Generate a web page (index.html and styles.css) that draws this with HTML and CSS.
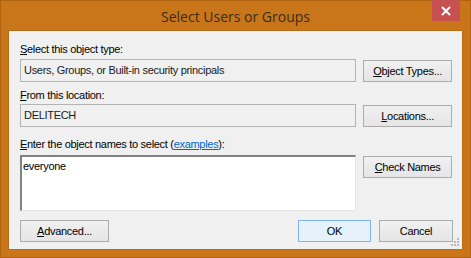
FILE: index.html
```html
<!DOCTYPE html>
<html lang="en">
<head>
  <meta charset="UTF-8" />
  <title>Select Users or Groups</title>
  <link rel="stylesheet" href="styles.css">
</head>
<body>

  <div class="window">
    <div class="titlebar">
      <div class="title">Select Users or Groups</div>
      <div class="close-btn">
        <svg width="10" height="10" viewBox="0 0 10 10"><path d="M1 1 L9 9 M9 1 L1 9" stroke="#fff" stroke-width="2" /></svg>
      </div>
    </div>

    <div class="client">
      <div class="label"><u>S</u>elect this object type:</div>
      <div class="row">
        <div class="field">Users, Groups, or Built-in security principals</div>
        <button class="btn"><u>O</u>bject Types...</button>
      </div>

      <div class="label label-tight"><u>F</u>rom this location:</div>
      <div class="row row-spaced">
        <div class="field">DELITECH</div>
        <button class="btn"><u>L</u>ocations...</button>
      </div>

      <div class="label label-loose"><u>E</u>nter the object names to select (<a href="#">examples</a>):</div>
      <div class="row row-top">
        <div class="names">everyone</div>
        <button class="btn"><u>C</u>heck Names</button>
      </div>

      <div class="footer">
        <button class="btn"><u>A</u>dvanced...</button>
        <div class="footer-right">
          <button class="btn btn-default">OK</button>
          <button class="btn btn-cancel">Cancel</button>
        </div>
      </div>

      <svg class="grip" width="8" height="8" viewBox="0 0 8 8">
        <rect x="6" y="0" width="2" height="2" fill="#b9b9b9" />
        <rect x="3" y="3" width="2" height="2" fill="#b9b9b9" />
        <rect x="6" y="3" width="2" height="2" fill="#b9b9b9" />
        <rect x="0" y="6" width="2" height="2" fill="#b9b9b9" />
        <rect x="3" y="6" width="2" height="2" fill="#b9b9b9" />
        <rect x="6" y="6" width="2" height="2" fill="#b9b9b9" />
      </svg>
    </div>
  </div>

</body>
</html>
```

FILE: styles.css
```css
body {
  margin: 0;
  background-color: #c97519;
  font-family: 'Liberation Sans', Arial, sans-serif;
  font-size: 11px;
  letter-spacing: -0.3px;
  color: #000;
}

.window {
  width: 471px;
  height: 258px;
  box-sizing: border-box;
  border: 1px solid #b0640f;
  background-color: #c97519;
}

.titlebar {
  position: relative;
  height: 29px;
  display: flex;
  justify-content: center;
  align-items: center;
}

.title {
  font-family: 'Open Sans', 'Liberation Sans', sans-serif;
  font-size: 14px;
  letter-spacing: 0;
  color: #3a2d1c;
  margin-top: 1px;
}

.close-btn {
  position: absolute;
  top: -1px;
  right: 10px;
  width: 28px;
  height: 21px;
  background-color: #c75050;
  display: flex;
  justify-content: center;
  align-items: center;
}

.client {
  position: relative;
  margin: 0 7px;
  height: 220px;
  box-sizing: border-box;
  border: 1px solid #b96c16;
  background-color: #f0f0f0;
  padding: 11px 10px 0 11px;
}

.label {
  line-height: 15px;
  height: 15px;
  margin-bottom: 2px;
}

.label-tight {
  margin-bottom: 1px;
}

.label-loose {
  margin-bottom: 3px;
}

.label a {
  color: #0066cc;
}

.row {
  display: flex;
  align-items: center;
  gap: 7px;
  margin-bottom: 6px;
}

.row-spaced {
  margin-bottom: 10px;
}

.row-top {
  align-items: flex-start;
  margin-bottom: 9px;
}

.field {
  width: 337px;
  height: 23px;
  box-sizing: border-box;
  border: 1px solid #b4b4b4;
  background-color: #f0f0f0;
  padding: 0 3px;
  line-height: 21px;
  color: #1a1a1a;
}

.names {
  width: 337px;
  height: 56px;
  box-sizing: border-box;
  border-top: 2px solid #828282;
  border-left: 2px solid #828282;
  border-right: 1px solid #e3e3e3;
  border-bottom: 1px solid #e3e3e3;
  background-color: #fff;
  padding: 2px 1px;
  line-height: 14px;
}

.btn {
  width: 89px;
  height: 22px;
  box-sizing: border-box;
  border: 1px solid #acacac;
  background: linear-gradient(#f0f0f0, #e5e5e5);
  font-family: inherit;
  font-size: 11px;
  letter-spacing: inherit;
  color: #000;
  padding: 0;
  line-height: 20px;
}

.row-top .btn {
  margin-top: 1px;
}

.btn-default {
  width: 73px;
  border-color: #7eb4ea;
  background: #e5f1fb;
}

.btn-cancel {
  width: 74px;
}

.footer {
  display: flex;
  justify-content: space-between;
  width: 433px;
}

.footer-right {
  display: flex;
  gap: 8px;
}

.grip {
  position: absolute;
  right: 3px;
  bottom: 3px;
}
```
